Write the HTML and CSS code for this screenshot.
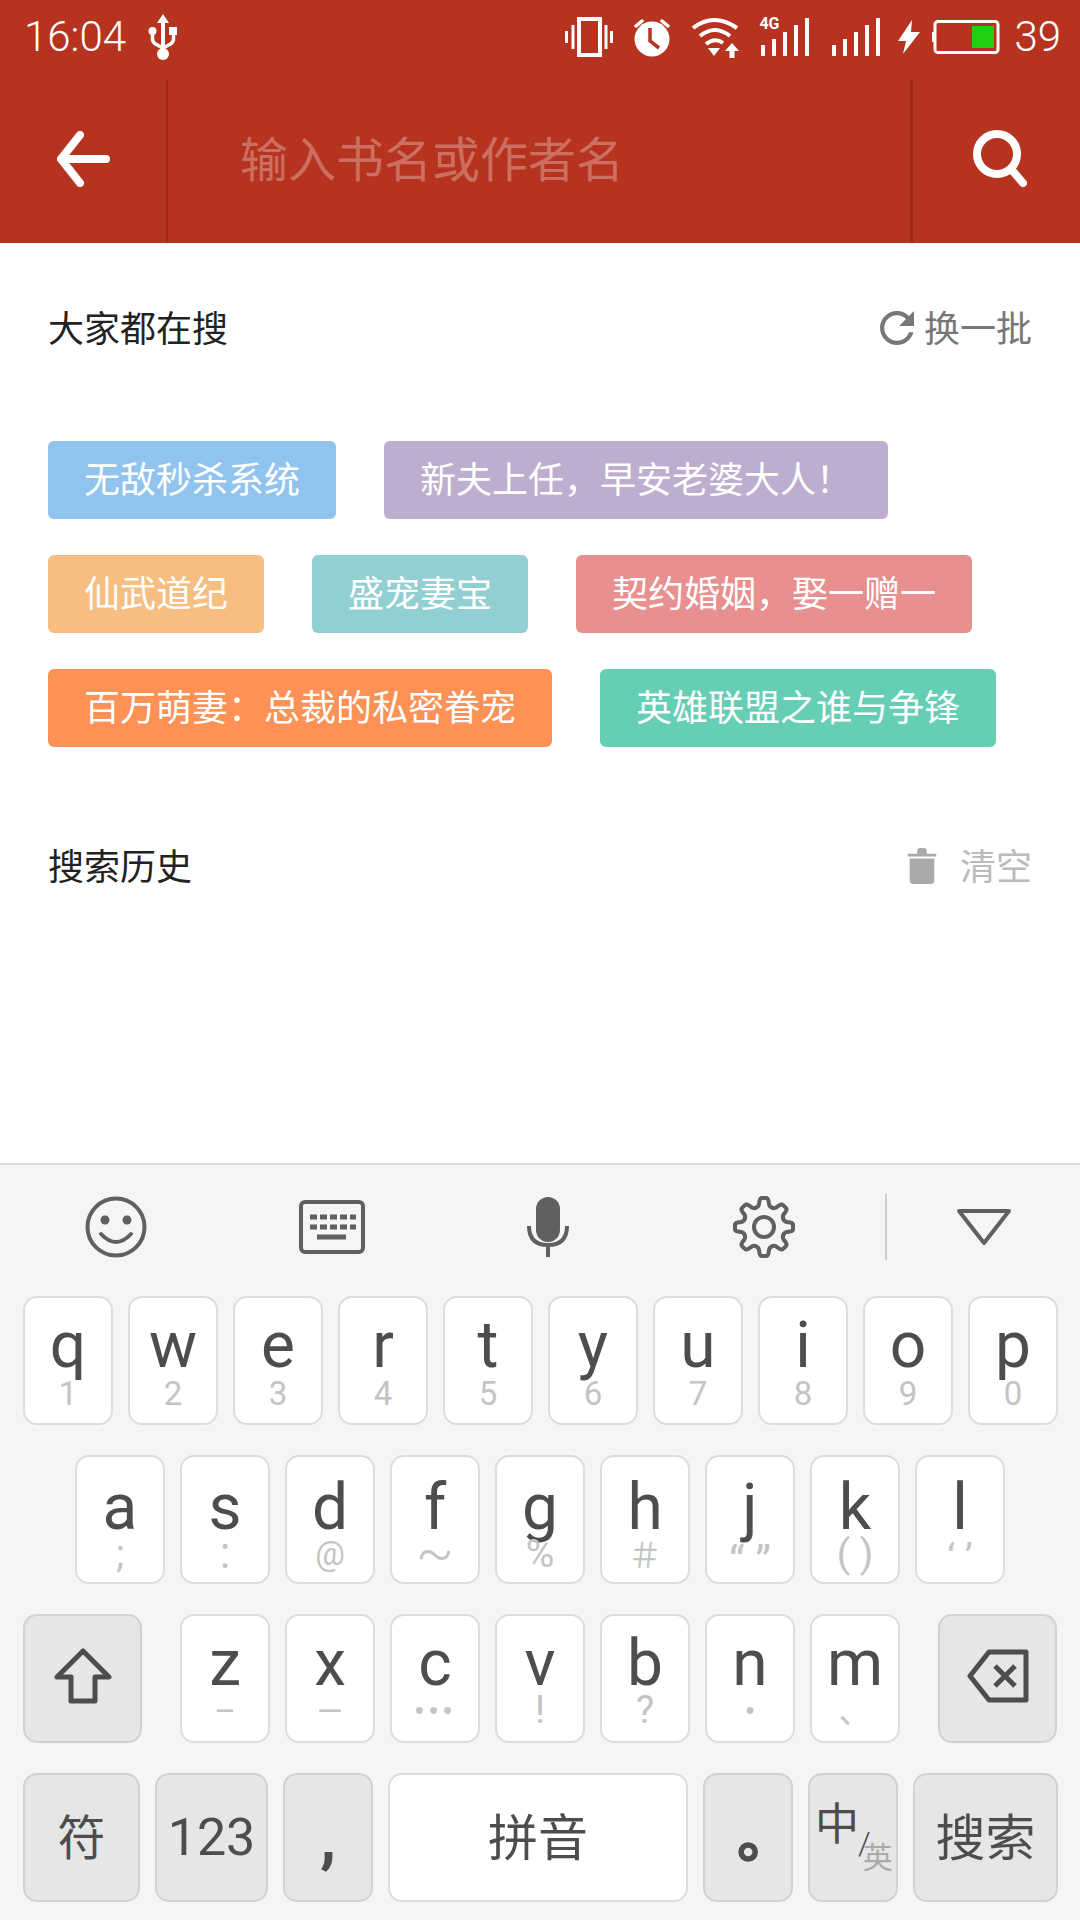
FILE: index.html
```html
<!DOCTYPE html>
<html lang="zh-CN">
<head>
    <meta charset="UTF-8">
    <title>搜索</title>
    <link rel="stylesheet" href="styles.css">
</head>
<body>

    <div class="status-bar">
        <span class="clock">16:04</span>
        <svg class="usb-icon" width="30" height="46" viewBox="0 0 30 46">
            <path d="M15 0l6 9h-4v27h-4V9H9z" fill="#fff"/>
            <circle cx="15" cy="40" r="6" fill="#fff"/>
            <circle cx="4.500" cy="17" r="4" fill="#fff"/>
            <rect x="21" y="13" width="8" height="8" fill="#fff"/>
            <path d="M4.500 19v6q0 3 3 5l7.500 4 7.500-4q3-2 3-5v-6" fill="none" stroke="#fff" stroke-width="3.500"/>
        </svg>
        <div class="status-right">
            <svg width="48" height="40" viewBox="0 0 48 40">
                <rect x="14" y="2" width="21" height="36" fill="none" stroke="#fff" stroke-width="4"/>
                <path d="M1.500 14v12M8 8v24M41 8v24M46.500 14v12" stroke="#fff" stroke-width="3" fill="none"/>
            </svg>
            <svg width="36" height="40" viewBox="0 0 36 40">
                <path d="M2 9l6-5M34 9l-6-5" stroke="#fff" stroke-width="3.500" stroke-linecap="round"/>
                <circle cx="18" cy="22" r="17.500" fill="#fff"/>
                <path d="M16 11v13l9 7" fill="none" stroke="#b5331f" stroke-width="3.500"/>
            </svg>
            <svg width="48" height="42" viewBox="0 0 48 42">
                <path d="M2 12q21-16 44 0M9 20q15-12 30 0M15 28q9-7 17-1" fill="none" stroke="#fff" stroke-width="4"/>
                <path d="M17 32h12l-6 8z" fill="#fff"/>
                <path d="M41 27l7 8h-4.500v7h-5v-7H34z" fill="#fff"/>
            </svg>
            <div class="net-icon">
                <svg width="51" height="38" viewBox="0 0 51 38">
                    <path d="M3 27v11M14 21v17M25 14v24M36 7v31M47 0v38" stroke="#fff" stroke-width="4" fill="none"/>
                </svg>
                <span class="net-label">4G</span>
            </div>
            <svg width="49" height="38" viewBox="0 0 49 38">
                <path d="M2 27v11M13 21v17M24 14v24M35 7v31M46 0v38" stroke="#fff" stroke-width="4" fill="none"/>
            </svg>
            <svg class="bolt-icon" width="22" height="34" viewBox="0 0 22 34">
                <path d="M14 0L0 21h8l-3 13 17-22h-9z" fill="#fff"/>
            </svg>
            <svg class="battery-icon" width="68" height="34" viewBox="0 0 68 34">
                <rect x="3" y="1.500" width="63" height="31" rx="3" fill="none" stroke="#fff" stroke-width="3"/>
                <rect x="0" y="12" width="3" height="10" fill="#fff"/>
                <rect x="40" y="6" width="22" height="22" fill="#22d012"/>
            </svg>
            <span class="level">39</span>
        </div>
    </div>

    <div class="search-bar">
        <div class="bar-btn back-btn">
            <svg width="54" height="56" viewBox="0 0 54 56">
                <path d="M50 28H5M24 4L5 28l19 24" fill="none" stroke="#fff" stroke-width="8" stroke-linecap="round" stroke-linejoin="round"/>
            </svg>
        </div>
        <div class="search-input">输入书名或作者名</div>
        <div class="bar-btn find-btn">
            <svg width="54" height="58" viewBox="0 0 54 58">
                <circle cx="24" cy="24" r="20" fill="none" stroke="#fff" stroke-width="8"/>
                <path d="M38 39l12 14" stroke="#fff" stroke-width="8" stroke-linecap="round"/>
            </svg>
        </div>
    </div>

    <div class="section-head hot-head">
        <span>大家都在搜</span>
        <div class="head-action">
            <svg width="34" height="34" viewBox="4 4 16 16">
                <path d="M17.650 6.350A7.950 7.950 0 0 0 12 4c-4.420 0-7.990 3.580-7.990 8s3.570 8 7.990 8c3.730 0 6.840-2.550 7.730-6h-2.080A5.990 5.990 0 0 1 12 18c-3.310 0-6-2.690-6-6s2.690-6 6-6c1.660 0 3.140.690 4.220 1.780L13 11h7V4l-2.350 2.350z" fill="#777"/>
            </svg>
            <span>换一批</span>
        </div>
    </div>

    <div class="tags">
        <span class="tag tag-blue">无敌秒杀系统</span>
        <span class="tag tag-purple">新夫上任&#xFF0C;早安老婆大人&#xFF01;</span>
        <span class="tag tag-orange">仙武道纪</span>
        <span class="tag tag-teal">盛宠妻宝</span>
        <span class="tag tag-pink">契约婚姻&#xFF0C;娶一赠一</span>
        <span class="tag tag-deep">百万萌妻&#xFF1A;总裁的私密眷宠</span>
        <span class="tag tag-green">英雄联盟之谁与争锋</span>
    </div>

    <div class="section-head history-head">
        <span>搜索历史</span>
        <div class="head-action clear-action">
            <svg width="30" height="36" viewBox="0 0 30 38">
                <path d="M0 6h30v3H0zM10 3q0-3 3-3h4q3 0 3 3v3H10z" fill="#aaa"/>
                <path d="M2 11h26v23q0 4-4 4H6q-4 0-4-4z" fill="#aaa"/>
            </svg>
            <span>清空</span>
        </div>
    </div>

    <div class="keyboard">
        <div class="kb-tools">
            <div class="tool">
                <svg width="62" height="62" viewBox="0 0 62 62">
                    <circle cx="31" cy="31" r="28.500" fill="none" stroke="#606060" stroke-width="4"/>
                    <circle cx="20" cy="24" r="4.500" fill="#606060"/>
                    <circle cx="42" cy="24" r="4.500" fill="#606060"/>
                    <path d="M16 38q15 16 30 0" fill="none" stroke="#606060" stroke-width="4" stroke-linecap="round"/>
                </svg>
            </div>
            <div class="tool">
                <svg width="66" height="54" viewBox="0 0 66 54">
                    <rect x="2" y="2" width="62" height="50" rx="4" fill="none" stroke="#606060" stroke-width="4"/>
                    <path d="M11 17h7M21 17h7M31 17h7M41 17h7M51 17h6M11 27h7M21 27h7M31 27h7M41 27h7M51 27h6M18 37h29" stroke="#606060" stroke-width="5" fill="none"/>
                </svg>
            </div>
            <div class="tool">
                <svg width="42" height="60" viewBox="0 0 42 60">
                    <rect x="9" y="0" width="24" height="45" rx="12" fill="#606060"/>
                    <path d="M2 29q0 19 19 19t19-19M21 48v12" fill="none" stroke="#606060" stroke-width="4"/>
                </svg>
            </div>
            <div class="tool">
                <svg width="62" height="62" viewBox="-31 -31 62 62">
                    <g fill="none" stroke="#606060" stroke-width="4" stroke-linecap="round" stroke-linejoin="round">
                        <path id="tooth" d="M-8 -19.400Q-5.500 -20 -5 -23L-4.500 -26Q-4 -29 -2 -29L2 -29Q4 -29 4.500 -26L5 -23Q5.500 -20 8 -19.400"/>
                        <use href="#tooth" transform="rotate(45)"/>
                        <use href="#tooth" transform="rotate(90)"/>
                        <use href="#tooth" transform="rotate(135)"/>
                        <use href="#tooth" transform="rotate(180)"/>
                        <use href="#tooth" transform="rotate(225)"/>
                        <use href="#tooth" transform="rotate(270)"/>
                        <use href="#tooth" transform="rotate(315)"/>
                        <circle r="10"/>
                    </g>
                </svg>
            </div>
            <div class="tool-sep"></div>
            <div class="tool tool-last">
                <svg width="56" height="38" viewBox="0 0 56 38">
                    <path d="M3 3h50L28 35z" fill="none" stroke="#606060" stroke-width="4" stroke-linejoin="round"/>
                </svg>
            </div>
        </div>

        <div class="kb-row row-top">
            <div class="key"><b>q</b><i>1</i></div>
            <div class="key"><b>w</b><i>2</i></div>
            <div class="key"><b>e</b><i>3</i></div>
            <div class="key"><b>r</b><i>4</i></div>
            <div class="key"><b>t</b><i>5</i></div>
            <div class="key"><b>y</b><i>6</i></div>
            <div class="key"><b>u</b><i>7</i></div>
            <div class="key"><b>i</b><i>8</i></div>
            <div class="key"><b>o</b><i>9</i></div>
            <div class="key"><b>p</b><i>0</i></div>
        </div>
        <div class="kb-row row-mid">
            <div class="key"><b>a</b><i class="sub-md">;</i></div>
            <div class="key"><b>s</b><i class="sub-lg">:</i></div>
            <div class="key"><b>d</b><i class="sub-at">@</i></div>
            <div class="key"><b>f</b><i class="sub-xl">~</i></div>
            <div class="key"><b>g</b><i class="sub-md">%</i></div>
            <div class="key"><b>h</b><i class="sub-hash">&#xFF03;</i></div>
            <div class="key"><b>j</b><i class="sub-quote">“ ”</i></div>
            <div class="key"><b>k</b><i class="sub-md">( )</i></div>
            <div class="key"><b>l</b><i class="sub-md sub-low">‘ ’</i></div>
        </div>
        <div class="kb-row row-low">
            <div class="key key-gray key-shift">
                <svg width="58" height="56" viewBox="0 0 58 56">
                    <path d="M29 3l26 26H41v24H17V29H3z" fill="none" stroke="#4d4d4d" stroke-width="5" stroke-linejoin="round"/>
                </svg>
            </div>
            <div class="key"><b>z</b><i>–</i></div>
            <div class="key"><b>x</b><i>—</i></div>
            <div class="key"><b>c</b><i class="sub-dots">•••</i></div>
            <div class="key"><b>v</b><i class="sub-md">!</i></div>
            <div class="key"><b>b</b><i class="sub-md">?</i></div>
            <div class="key"><b>n</b><i>•</i></div>
            <div class="key"><b>m</b><i>、</i></div>
            <div class="key key-gray key-back">
                <svg width="62" height="54" viewBox="0 0 62 54">
                    <path d="M3 27L22 3h37v48H22z" fill="none" stroke="#4d4d4d" stroke-width="5" stroke-linejoin="round"/>
                    <path d="M28 17l20 20M48 17L28 37" fill="none" stroke="#4d4d4d" stroke-width="5"/>
                </svg>
            </div>
        </div>
        <div class="kb-row row-bottom">
            <div class="key key-gray key-wide key-sym">符</div>
            <div class="key key-gray key-wide key-num">123</div>
            <div class="key key-gray key-comma">,</div>
            <div class="key key-wide key-space">拼音</div>
            <div class="key key-gray key-stop">。</div>
            <div class="key key-gray key-lang"><span class="lang-main">中</span><span class="lang-slash">/</span><span class="lang-sub">英</span></div>
            <div class="key key-gray key-wide key-go">搜索</div>
        </div>
    </div>

</body>
</html>
```

FILE: styles.css
```css
* {
    box-sizing: border-box;
}

body {
    margin: 0;
    width: 1080px;
    height: 1920px;
    display: flex;
    flex-direction: column;
    background: #fff;
    font-family: "Noto Sans CJK SC", sans-serif;
    overflow: hidden;
}

/* top */
.status-bar {
    height: 78px;
    display: flex;
    align-items: center;
    padding: 0 19px 4px 24px;
    background: #b5331f;
    color: #fff;
    flex: none;
}
.clock,
.level {
    font-family: Roboto, sans-serif;
    font-weight: 300;
    font-size: 42px;
    line-height: 60px;
}
.usb-icon {
    margin-left: 22px;
}
.status-right {
    display: flex;
    align-items: center;
    gap: 21px;
    margin-left: auto;
}
.net-icon {
    position: relative;
    height: 38px;
}
.net-icon svg {
    display: block;
}
.net-label {
    position: absolute;
    top: -3px;
    left: -1px;
    font-family: Roboto, sans-serif;
    font-weight: 700;
    font-size: 16px;
    line-height: 18px;
    color: #fff;
}
.bolt-icon {
    margin-left: -4px;
}
.battery-icon {
    margin-left: -9px;
}
.level {
    margin-left: -7px;
}

.search-bar {
    height: 165px;
    display: flex;
    background: #b5331f;
    flex: none;
}
.bar-btn {
    display: flex;
    align-items: center;
    justify-content: center;
    margin-top: 2px;
    padding-bottom: 5px;
}
.back-btn {
    width: 168px;
    border-right: 2px solid #9c2a18;
}
.find-btn {
    width: 170px;
    border-left: 3px solid #9c2a18;
    padding-left: 6px;
}
.search-input {
    flex: 1;
    padding-left: 72px;
    font-size: 48px;
    line-height: 156px;
    color: #cc6f60;
}

/* lists */
.section-head {
    display: flex;
    justify-content: space-between;
    align-items: center;
    padding: 0 48px;
    height: 50px;
    font-size: 36px;
    line-height: 36px;
    color: #222;
    flex: none;
}
.section-head span {
    margin-bottom: 4px;
}
.hot-head {
    margin-top: 60px;
}
.history-head {
    margin-top: 94px;
}
.head-action {
    display: flex;
    align-items: center;
    gap: 10px;
    color: #777;
}
.clear-action {
    gap: 23px;
    color: #bbb;
}

.tags {
    display: flex;
    flex-wrap: wrap;
    gap: 36px 48px;
    padding: 0 48px;
    margin-top: 88px;
    flex: none;
}
.tag {
    height: 78px;
    line-height: 72px;
    padding: 0 36px;
    border-radius: 6px;
    font-size: 36px;
    color: #fff;
}
.tag-blue { background: #90c4ee; }
.tag-purple { background: #bdaecf; }
.tag-orange { background: #f7be82; }
.tag-teal { background: #92cfd3; }
.tag-pink { background: #e88f8f; }
.tag-deep { background: #fd9156; }
.tag-green { background: #66ceb5; }

/* keyboard */
.keyboard {
    margin-top: auto;
    height: 757px;
    flex: none;
    background: #f5f5f5;
    border-top: 2px solid #dcdcdc;
}
.kb-tools {
    height: 131px;
    display: flex;
    align-items: center;
    padding: 0 0 7px 8px;
}
.tool {
    width: 216px;
    display: flex;
    justify-content: center;
}
.tool-last {
    flex: 1;
}
.tool-sep {
    width: 2px;
    height: 66px;
    margin-left: 13px;
    background: #ccc;
}

.kb-row {
    display: flex;
    height: 129px;
    gap: 15px;
    margin-bottom: 30px;
    padding-left: 23px;
}
.row-mid {
    padding-left: 75px;
}

.key {
    width: 90px;
    height: 129px;
    flex: none;
    display: flex;
    flex-direction: column;
    align-items: center;
    background: #fff;
    border: 2px solid #ddd;
    border-radius: 14px;
    padding-top: 16px;
    font-family: Roboto, "Noto Sans CJK SC", sans-serif;
    color: #4d4d4d;
}
.row-mid .key {
    padding-top: 19px;
}
.key b {
    font-weight: 400;
    font-size: 64px;
    line-height: 64px;
}
.key i {
    font-style: normal;
    font-size: 33px;
    line-height: 32px;
    margin-top: 0;
    color: #c4c4c4;
}
.key i.sub-at { margin-top: -2px; }
.key i.sub-md { font-size: 39px; margin-top: -2px; }
.key i.sub-lg { font-size: 44px; margin-top: -3px; }
.key i.sub-xl { font-size: 56px; margin-top: -3px; font-weight: 300; }
.key i.sub-hash { font-size: 34px; font-family: "Noto Sans CJK SC", sans-serif; margin-top: -2px; }
.key i.sub-quote { font-size: 44px; line-height: 44px; margin-top: 0; }
.key i.sub-low { margin-top: 2px; }
.key i.sub-dots { letter-spacing: 3px; }

.key-gray {
    background: #e6e6e6;
    border-color: #d2d2d2;
}
.key-wide {
    padding-top: 0;
    padding-bottom: 7px;
    justify-content: center;
    font-size: 50px;
}
.key-shift,
.key-back {
    width: 119px;
    padding: 0 0 6px;
    justify-content: center;
}
.key-shift {
    margin-right: 23px;
}
.key-back {
    margin-left: 23px;
}
.key-sym { width: 117px; font-size: 48px; }
.key-num { width: 113px; font-size: 52px; padding-bottom: 0; }
.key-comma {
    font-size: 66px;
    font-weight: 700;
    padding-top: 24px;
}
.key-space { width: 300px; }
.key-stop {
    font-family: "Noto Sans CJK TC", sans-serif;
    font-size: 56px;
    font-weight: 700;
    padding-top: 33px;
    -webkit-text-stroke: 1.5px #4d4d4d;
}
.key-go { width: 145px; }
.key-lang {
    flex-direction: row;
    align-items: flex-start;
    padding: 26px 0 0 5px;
    font-size: 44px;
    line-height: 48px;
}
.lang-slash {
    font-family: Roboto, sans-serif;
    font-weight: 300;
    font-size: 32px;
    line-height: 32px;
    margin: 26px 0 0 -1px;
}
.lang-sub {
    font-size: 30px;
    line-height: 30px;
    margin: 42px 0 0 -8px;
    color: #aaa;
}
```
